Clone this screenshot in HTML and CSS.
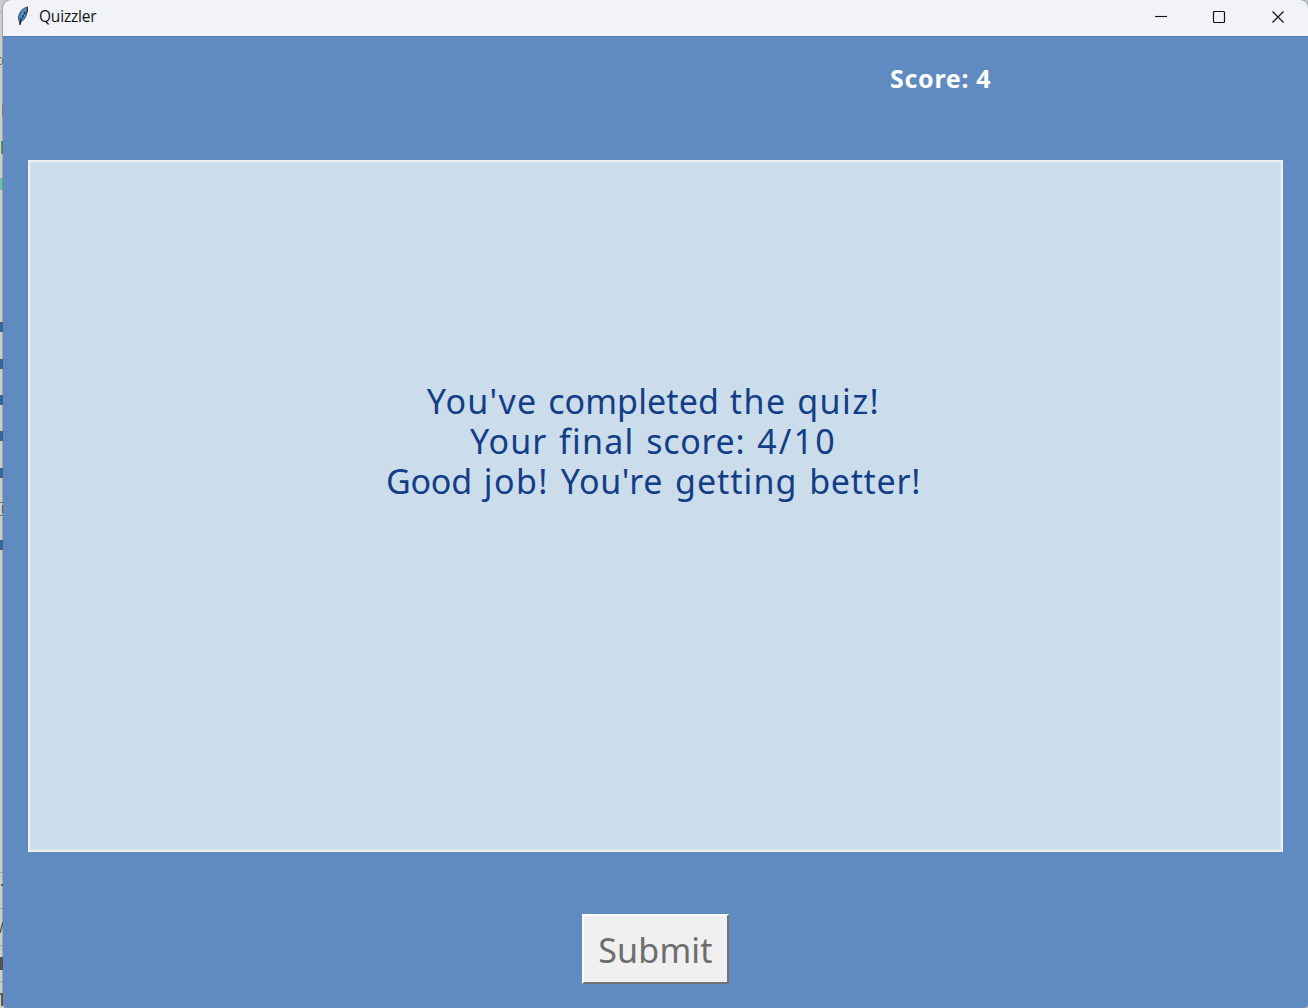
FILE: index.html
```html
<!DOCTYPE html>
<html lang="en">
<head>
<meta charset="utf-8">
<title>Quizzler</title>
<link rel="stylesheet" href="styles.css">
</head>
<body>
<div class="desktop">
  <svg class="backdrop" width="3" height="1008" viewBox="0 0 3 1008" aria-hidden="true">
    <rect width="3" height="1008" fill="#cdcdcb"/>
    <path d="M0 12.500h2M0 872.500h3M0 908.500h3M0 945.500h3M0 981.500h3" stroke="#aaa"/>
    <path d="M0 57.500h1.500l1 2v3l-1 2H0" fill="none" stroke="#776b62"/>
    <path d="M2 104h1v13H2z" fill="#b58254"/>
    <path d="M1 141h2v13H1z" fill="#529565"/>
    <path d="M0 178h3v12H0z" fill="#6bc0a8"/>
    <path d="M0 322h3v10H0zM0 359h3v10H0zM0 395h3v10H0zM0 431h3v10H0zM0 468h3v10H0zM0 540h3v10H0z" fill="#346996"/>
    <path d="M0 502.500h3M0 515.500h3" stroke="#857155"/>
    <path d="M2 505h1v8H2z" fill="#90512f"/>
    <path d="M1 884h2v2H1z" fill="#705a45"/>
    <path d="M0 933l3-11" stroke="#655749" stroke-width="1.500"/>
    <path d="M0 957h3v13H0z" fill="#5b5050"/>
    <path d="M0 993h3v2H0zM1 995h2v11H1z" fill="#655749"/>
  </svg>
  <main class="window">
    <header class="titlebar">
      <svg class="feather" width="14" height="20" viewBox="0 0 14 20" aria-hidden="true">
        <path d="M11.500 1C8 1.500 4.300 5 3 9c-.800 3-.600 5 .400 6.500L4 19l1-3.500c3-1.200 4.500-4 5.200-7 .600-2.500.600-5 1.300-7.500z" fill="#4a8ad4" stroke="#555b63" stroke-width="1.100"/>
        <path d="M9 6L8.300 8M7.500 9l-.800 2.500M5.300 12L4.300 16v2.500" fill="none" stroke="#151d28" stroke-width="1.200"/>
        <path d="M11.500 1v4L10 9.500" fill="none" stroke="#30343a"/>
      </svg>
      <span class="title">Quizzler</span>
      <svg class="controls" width="130" height="14" viewBox="0 0 130 14" fill="none" stroke="#111" aria-hidden="true">
        <path d="M1 6.500h12" stroke-width="1.100"/>
        <rect x="59.500" y="1.500" width="11" height="11" rx="1" stroke-width="1.200"/>
        <path d="M118.500 1.500l11 11M129.500 1.500l-11 11" stroke-width="1.200"/>
      </svg>
    </header>
    <div class="scorebar"><span class="score">Score: 4</span></div>
    <section class="canvas">
      <p class="line"><span class="wide">You've</span> <span class="snug">completed</span> <span class="wider">the</span> <span class="wider">quiz!</span></p>
      <p class="line roomy"><span>Your</span> <span class="wide">final</span> <span class="close">score:</span> <span class="digits">4/10</span></p>
      <p class="line roomy"><span class="tight">Good</span> <span class="wider">job!</span> <span class="close">You're</span> <span>getting</span> <span class="close">better!</span></p>
    </section>
    <footer class="actions"><button class="submit" disabled>Submit</button></footer>
  </main>
</div>
</body>
</html>
```
FILE: styles.css
```css
body { margin: 0; overflow: hidden; }
.desktop { display: flex; width: 1308px; height: 1008px; background: #c6c8c8; }
.backdrop { flex: none; }
.window {
  box-sizing: border-box;
  width: 1305px;
  height: 1008px;
  display: flex;
  flex-direction: column;
  align-items: stretch;
  background: #608bc1;
  border-radius: 8px 8px 5px 5px;
  box-shadow: 0 0 0 1px rgba(70, 80, 95, 0.3);
  overflow: hidden;
}
.titlebar {
  box-sizing: border-box;
  flex: none;
  height: 37px;
  padding: 0 24px 2px 13px;
  display: flex;
  align-items: center;
  background: #f1f3f8;
  border-bottom: 1px solid #5580b4;
}
.feather { margin-top: -2px; }
.title { margin: -2px 0 0 9px; font: 15.500px/20px "Open Sans", sans-serif; letter-spacing: -0.2px; color: #111; }
.controls { margin-left: auto; }
.scorebar { height: 123px; flex: none; padding-left: 887px; box-sizing: border-box; }
.score { display: block; padding-top: 24px; font: bold 25px/34px "Noto Sans", sans-serif; letter-spacing: 0.7px; color: #fff; white-space: nowrap; }
.canvas {
  box-sizing: border-box;
  flex: none;
  height: 692px;
  width: 1255px;
  margin-left: 25px;
  border: 2px solid #f0f0f0;
  outline: 1px solid rgba(240, 240, 240, 0.3);
  outline-offset: -3px;
  background: #cbdceb;
  padding: 219px 4px 0 0;
  text-align: center;
}
.line { margin: 0; font: 34px/40px "Noto Sans", sans-serif; color: #133e87; white-space: nowrap; letter-spacing: 1px; word-spacing: 1px; }
.roomy { word-spacing: 2px; }
.tight { letter-spacing: -0.2px; }
.snug { letter-spacing: 0.1px; }
.close { letter-spacing: 0.7px; }
.wide { letter-spacing: 1.2px; }
.wider { letter-spacing: 1.4px; }
.digits { letter-spacing: 2.200px; }
.actions { display: flex; justify-content: center; padding-top: 62px; }
.submit {
  box-sizing: border-box;
  width: 147px;
  height: 70px;
  padding: 2px 0 0;
  border: 2px solid;
  border-color: #fff #737373 #737373 #fff;
  background: #f0f0f0;
  color: #6d6d6d;
  font: 34px/40px "Noto Sans", sans-serif;
  letter-spacing: 0.2px;
}
```
